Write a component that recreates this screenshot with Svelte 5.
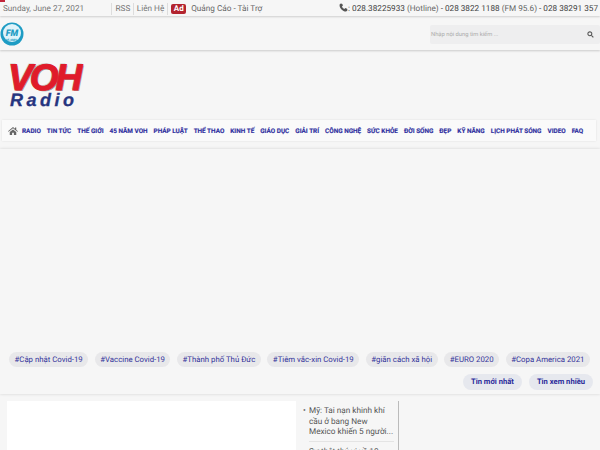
<script>
	const nav = ['RADIO', 'TIN TỨC', 'THẾ GIỚI', '45 NĂM VOH', 'PHÁP LUẬT', 'THỂ THAO', 'KINH TẾ', 'GIÁO DỤC', 'GIẢI TRÍ', 'CÔNG NGHỆ', 'SỨC KHỎE', 'ĐỜI SỐNG', 'ĐẸP', 'KỸ NĂNG', 'LỊCH PHÁT SÓNG', 'VIDEO', 'FAQ'];
	const tags = ['#Cập nhật Covid-19', '#Vaccine Covid-19', '#Thành phố Thủ Đức', '#Tiêm vắc-xin Covid-19', '#giãn cách xã hội', '#EURO 2020', '#Copa America 2021'];
</script>

<div class="page">
	<span class="corner"></span>
	<header class="topbar">
		<span class="date">Sunday, June 27, 2021</span>
		<span class="links">
			<span class="link">RSS</span>
			<span class="link">Liên Hệ</span>
		</span>
		<span class="ad"><b>Ad</b> Quảng Cáo - Tài Trợ</span>
		<span class="phone">
			<svg viewBox="0 0 16 16" width="9" height="9"><path fill="#555" d="M3.6 1 6 1.6 6.9 5 5.2 6.3c.8 1.800 2.400 3.500 4.400 4.500L11 9.100l3.400.9.600 2.500c-.2 1.300-1.300 2.500-2.800 2.500C6.600 15 1 9.300 1 3.800 1 2.400 2.200 1.200 3.600 1z"/></svg>:
			028.38225933 <i>(Hotline)</i> - 028 3822 1188 <i>(FM 95.6)</i> - 028 38291 357
		</span>
	</header>

	<div class="subbar">
		<svg class="fm" viewBox="0 0 24 24" width="24" height="24">
			<circle cx="12" cy="12" r="11.500" fill="#1e9cc4"/>
			<circle cx="12" cy="11" r="9" fill="#dff3fa"/>
			<text x="12" y="13.500" text-anchor="middle" class="fm-text">FM</text>
			<text x="12" y="18.500" text-anchor="middle" class="fm-sub">95.6MHz</text>
		</svg>
		<div class="search">
			<span>Nhập nội dung tìm kiếm ...</span>
			<svg viewBox="0 0 16 16" width="7" height="7"><circle cx="6.500" cy="6.500" r="4.500" fill="none" stroke="#555" stroke-width="2.400"/><path d="M10 10l4.500 4.500" stroke="#555" stroke-width="2.600"/></svg>
		</div>
	</div>

	<div class="logo">
		<div class="voh">VOH</div>
		<div class="radio">Radio</div>
	</div>

	<nav class="nav">
		<svg viewBox="0 0 20 16" width="10" height="10"><path fill="#666" d="M10 0 0 8.300 1.200 9.700 10 2.500l8.800 7.200L20 8.300 16.500 5.400V1h-2.500v2.300zM3.500 10.200V16h4.700v-4.500h3.600V16h4.700v-5.800L10 4.900z"/></svg>
		{#each nav as item}
			<span>{item}</span>
		{/each}
	</nav>

	<section class="hero">
		<div class="tags">
			{#each tags as tag}
				<span class="tag">{tag}</span>
			{/each}
		</div>
		<div class="tabs">
			<span class="tab">Tin mới nhất</span>
			<span class="tab">Tin xem nhiều</span>
		</div>
	</section>

	<section class="news">
		<div class="feature"></div>
		<ul class="list">
			<li>Mỹ: Tai nạn khinh khí cầu ở bang New Mexico khiến 5 người...</li>
			<li>Sự thật thú vị về 10 quả</li>
		</ul>
	</section>
</div>

<style>
	:global(body) {
		margin: 0;
		background: #f6f6f6;
	}

	.page {
		position: relative;
		width: 600px;
		height: 450px;
		overflow: hidden;
		font-family: Roboto, "Liberation Sans", sans-serif;
		text-rendering: geometricPrecision;
		background: #f6f6f6;
		color: #555;
	}

	.corner {
		position: absolute;
		top: 0;
		left: 0;
		width: 5px;
		height: 2px;
		background: #c2253a;
	}

	.topbar {
		height: 16px;
		display: flex;
		align-items: center;
		font-size: 8.200px;
		color: #777;
		padding: 1px 2px 0 3px;
		box-sizing: border-box;
		white-space: nowrap;
		box-shadow: 0 1px 2px rgba(0, 0, 0, 0.15);
		position: relative;
	}

	.date {
		width: 108px;
	}

	.links {
		display: flex;
		border-left: 1px solid #ddd;
		height: 12px;
		line-height: 12px;
	}

	.link {
		padding: 0 3px 0 3.500px;
		border-right: 1px solid #ddd;
	}

	.link + .link {
		padding: 0 3px 0 2.500px;
	}

	.ad {
		margin-left: 3px;
		color: #666;
	}

	.ad b {
		display: inline-block;
		background: #b3242f;
		color: #fff;
		border-radius: 2px;
		padding: 0 2.500px;
		margin-right: 3px;
		line-height: 10px;
		font-size: 8px;
	}

	.phone {
		margin-left: auto;
		color: #444;
	}

	.phone i {
		font-style: normal;
		color: #666;
	}

	.phone svg {
		vertical-align: -1px;
	}

	.subbar {
		height: 33px;
		margin-top: 1px;
		display: flex;
		align-items: center;
		justify-content: space-between;
		box-shadow: 0 1px 2px rgba(0, 0, 0, 0.18);
		position: relative;
	}

	.fm-text {
		font: italic 900 9px Roboto, sans-serif;
		fill: #1e9cc4;
	}

	.fm-sub {
		font: 700 3px Roboto, sans-serif;
		fill: #1e9cc4;
	}

	.search {
		width: 170px;
		height: 19px;
		margin-top: 2px;
		background: #eeeeef;
		border-radius: 2px;
		display: flex;
		align-items: center;
		justify-content: space-between;
		padding: 0 6px 0 1px;
		box-sizing: border-box;
		font-size: 5.800px;
		color: #aaa;
	}

	.logo {
		height: 70px;
		padding: 14px 0 0 8px;
		box-sizing: border-box;
	}

	.voh {
		font: italic 900 37px/28px "Liberation Sans", sans-serif;
		color: #e01b2a;
		letter-spacing: -3px;
		-webkit-text-stroke: 1px #e01b2a;
		text-shadow: 1px 1px 0 #999, -1px -1px 0 #ccc;
	}

	.radio {
		font: italic 700 18px/15px "Liberation Sans", sans-serif;
		color: #26357f;
		letter-spacing: 3.500px;
		margin: 1px 0 0 2px;
		-webkit-text-stroke: 0.3px #26357f;
	}

	.nav {
		height: 21px;
		margin: 0 4px 0 2px;
		padding: 0 0 0 6px;
		display: flex;
		align-items: center;
		gap: 6px;
		background: #fafafa;
		font-size: 6.400px;
		font-weight: 700;
		-webkit-text-stroke: 0.15px #2f2f9f;
		color: #2f2f9f;
		white-space: nowrap;
		box-shadow: 0 0 2px rgba(0, 0, 0, 0.1);
	}

	.nav svg {
		flex: none;
		margin-right: -2px;
	}

	.hero {
		height: 245px;
		margin-top: 8px;
		display: flex;
		flex-direction: column;
		justify-content: flex-end;
		box-shadow: 0 0 3px rgba(0, 0, 0, 0.15);
		padding: 0 7px 4px 9px;
		box-sizing: border-box;
	}

	.tags {
		display: flex;
		justify-content: space-between;
		margin-bottom: 7px;
		margin-right: 3px;
	}

	.tag, .tab {
		background: #e8e8ea;
		border-radius: 8px;
		height: 15px;
		line-height: 15px;
		padding: 0 5.500px;
		font-size: 7.800px;
		color: #33339a;
		white-space: nowrap;
	}

	.tabs {
		display: flex;
		justify-content: flex-end;
		gap: 7px;
	}

	.tab {
		background: #e6e8ee;
		font-size: 7.600px;
		font-weight: 700;
		padding: 0 8px;
		height: 16px;
		line-height: 16px;
		color: #2a2a9a;
	}

	.news {
		display: flex;
		margin: 7px 0 0 7px;
	}

	.feature {
		width: 289px;
		height: 60px;
		background: #fff;
	}

	.list {
		list-style: none;
		margin: 0;
		padding: 5px 4px 0 13px;
		width: 103px;
		box-sizing: border-box;
		border-right: 1px solid #bbb;
		font-size: 8.200px;
		line-height: 10.700px;
		color: #555;
	}

	.list li {
		position: relative;
		padding-bottom: 3px;
		margin-bottom: 5px;
		border-bottom: 1px solid #e4e4e4;
	}

	.list li::before {
		content: '•';
		position: absolute;
		left: -6px;
	}
</style>
